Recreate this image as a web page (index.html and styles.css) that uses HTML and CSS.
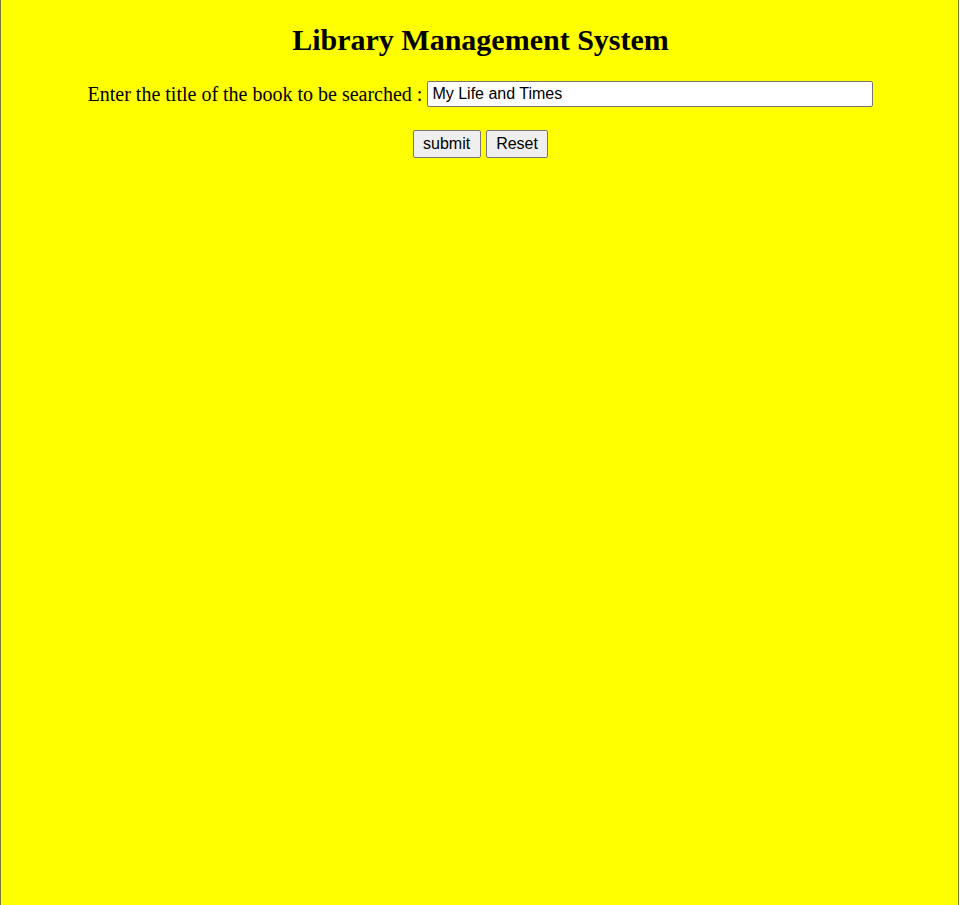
FILE: index.html
```html
<!DOCTYPE html>
<html>
<head>
<meta charset="utf-8">
<title>Library Management System</title>
<link rel="stylesheet" href="styles.css">
</head>
<body>
<div class="frame">
  <h1 class="title">Library Management System</h1>
  <form class="search">
    <div class="row">
      <label class="label" for="t">Enter the title of the book to be searched :</label>
      <input class="field" id="t" type="text" value="My Life and Times">
    </div>
    <div class="row buttons">
      <button class="btn" type="button">submit</button>
      <button class="btn" type="reset">Reset</button>
    </div>
  </form>
</div>
</body>
</html>
```

FILE: styles.css
```css
html, body {
  margin: 0;
  padding: 0;
  background: #ffffff;
}
.frame {
  width: 955px;
  height: 905px;
  padding-left: 2px;
  background: #ffff00;
  border-left: 1px solid #7a7a3a;
  border-right: 1px solid #7a7a3a;
  font-family: "Liberation Serif", "Times New Roman", serif;
  color: #000;
  box-sizing: content-box;
  padding-top: 0.1px;
}
.title {
  font-size: 30px;
  font-weight: bold;
  text-align: center;
  margin: 22px 0 0;
  line-height: 35px;
}
.search {
  margin: 0;
}
.row {
  display: flex;
  justify-content: center;
  align-items: center;
}
.row:first-child {
  margin-top: 24px;
}
.label {
  font-size: 20px;
  margin-right: 5px;
  margin-top: 1px;
}
.field {
  width: 446px;
  height: 26px;
  box-sizing: border-box;
  font-family: "Liberation Sans", Arial, sans-serif;
  font-size: 16px;
  padding: 1px 4px;
  border: 1px solid #767676;
  border-radius: 2px;
  background: #fff;
  margin: 0;
}
.buttons {
  margin-top: 23px;
  gap: 5px;
}
.btn {
  font-family: "Liberation Sans", Arial, sans-serif;
  font-size: 16px;
  height: 28px;
  padding: 1px 9.5px;
  border: 1px solid #767676;
  border-radius: 2px;
  background: #efefef;
  color: #000;
  margin: 0;
}
```
